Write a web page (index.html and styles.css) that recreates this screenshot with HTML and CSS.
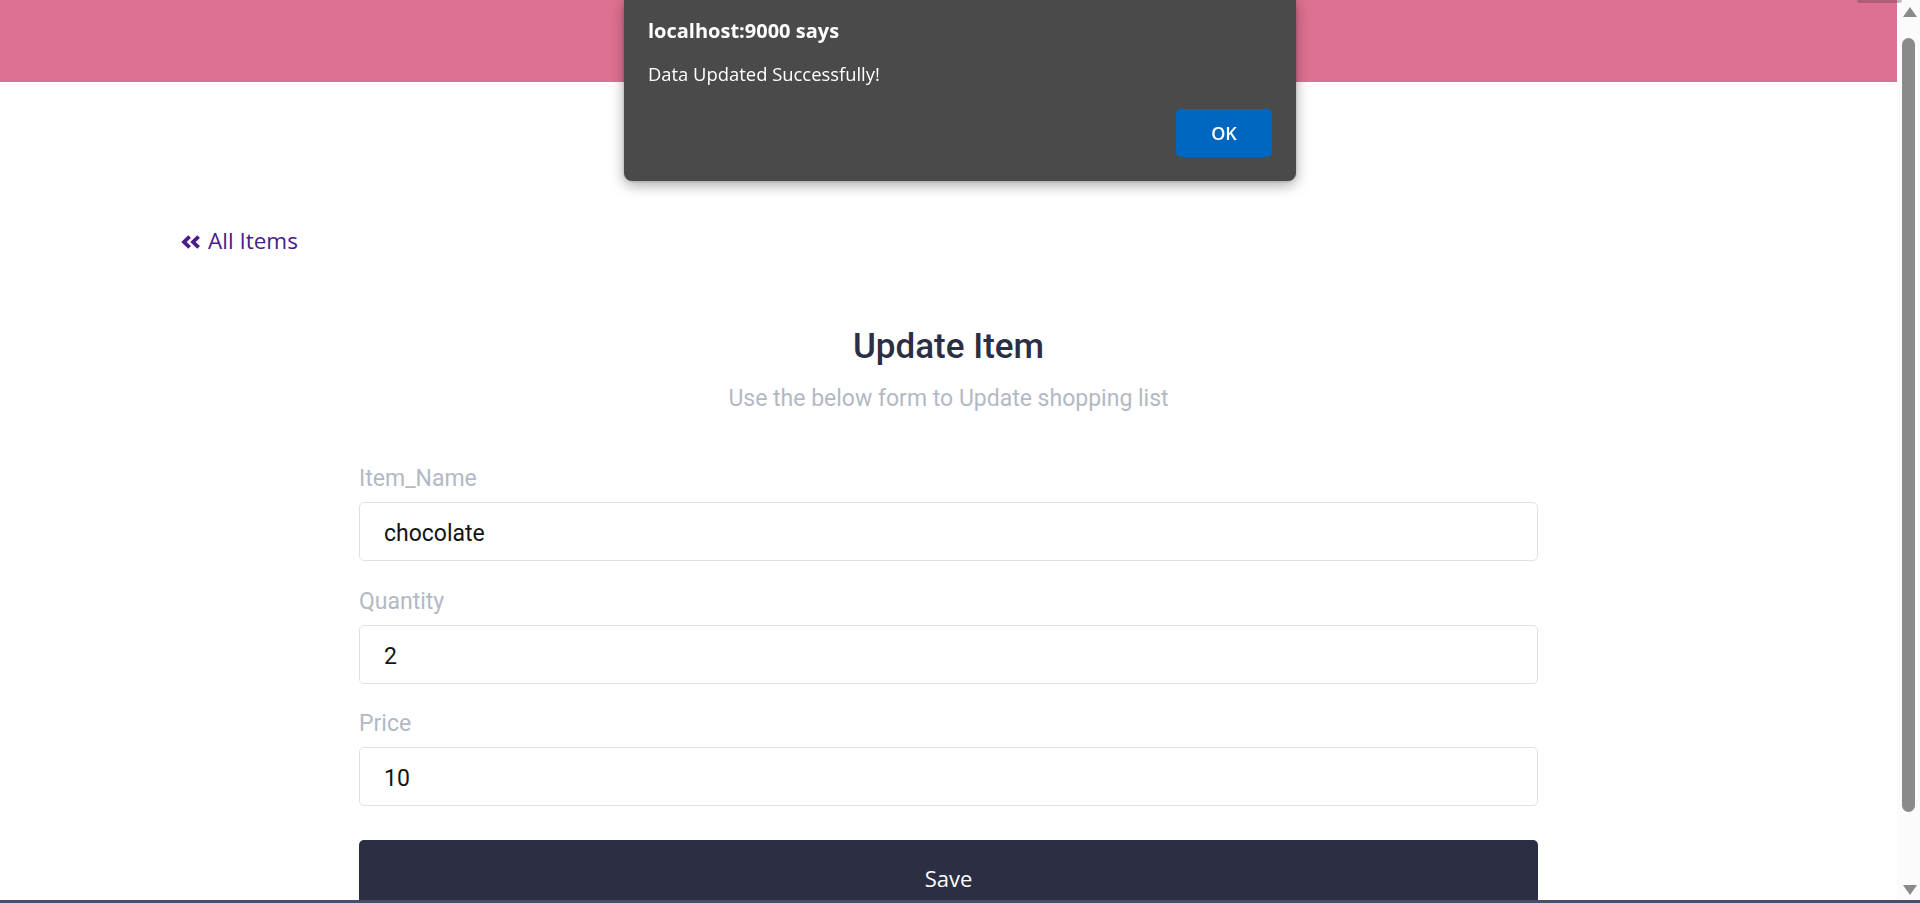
FILE: index.html
```html
<!DOCTYPE html>
<html lang="en">
<head>
<meta charset="utf-8">
<title>Update Item</title>
<link rel="stylesheet" href="styles.css">
</head>
<body>
<div class="window">
  <div class="page">
    <header class="topbar"></header>
    <div class="container">
      <a class="back-link" href="#">
        <svg class="back-icon" viewBox="0 0 20 14" width="20" height="14" aria-hidden="true">
          <polyline points="8.6,1.6 3,7 8.6,12.4" />
          <polyline points="17.6,1.6 12,7 17.6,12.4" />
        </svg>
        <span>All Items</span>
      </a>
      <h1 class="title">Update Item</h1>
      <p class="subtitle">Use the below form to Update shopping list</p>
      <form class="item-form">
        <div class="field">
          <label class="field-label" for="name">Item_Name</label>
          <input class="field-input" id="name" type="text" value="chocolate">
        </div>
        <div class="field">
          <label class="field-label" for="qty">Quantity</label>
          <input class="field-input" id="qty" type="text" value="2">
        </div>
        <div class="field">
          <label class="field-label" for="price">Price</label>
          <input class="field-input" id="price" type="text" value="10">
        </div>
        <button class="save-btn" type="button">Save</button>
      </form>
    </div>
  </div>
  <div class="scrollbar">
    <div class="scroll-arrow up"></div>
    <div class="scroll-track">
      <div class="scroll-thumb"></div>
    </div>
    <div class="scroll-arrow down"></div>
  </div>
</div>

<div class="corner-tab"></div>

<div class="alert-dialog" role="alertdialog">
  <div class="alert-title">localhost:9000 says</div>
  <div class="alert-message">Data Updated Successfully!</div>
  <div class="alert-actions">
    <button class="alert-ok" type="button">OK</button>
  </div>
</div>

<div class="bottom-edge"></div>
</body>
</html>
```

FILE: styles.css
```css
* {
  box-sizing: border-box;
}

html, body {
  margin: 0;
  padding: 0;
  height: 100%;
  overflow: hidden;
  background: #ffffff;
}

body {
  font-family: Roboto, "Noto Sans", sans-serif;
}

.window {
  display: flex;
  height: 903px;
  width: 1920px;
}

.page {
  flex: 1;
  min-width: 0;
  background: #ffffff;
}

.topbar {
  height: 82px;
  background: #dd7191;
}

.container {
  padding-left: 181px;
}

.back-link {
  display: inline-flex;
  align-items: center;
  gap: 7px;
  margin-top: 144px;
  height: 30px;
  font-family: "Open Sans", "Noto Sans", sans-serif;
  font-size: 22.5px;
  line-height: 30px;
  color: #4a1c8a;
  text-decoration: none;
}

.back-icon {
  display: block;
  margin-top: 1px;
}

.back-icon polyline {
  fill: none;
  stroke: #4a1c8a;
  stroke-width: 3.8;
  stroke-linecap: butt;
  stroke-linejoin: miter;
}

.title {
  margin: 70px 0 0 -181px;
  text-align: center;
  font-family: Roboto, sans-serif;
  font-weight: 500;
  font-size: 35px;
  line-height: 42px;
  color: #2c2e43;
}

.subtitle {
  margin: 17px 0 0 -181px;
  text-align: center;
  font-size: 23px;
  line-height: 28px;
  color: #b3b9c4;
}

.item-form {
  width: 1179px;
  margin: 52px 0 0 178px;
  display: flex;
  flex-direction: column;
}

.field {
  display: flex;
  flex-direction: column;
  margin-bottom: 26.5px;
}

.field-label {
  font-size: 23px;
  line-height: 28px;
  color: #b3b9c4;
  margin-bottom: 9px;
}

.field-input {
  height: 59px;
  width: 100%;
  border: 1px solid #dfe1e6;
  border-radius: 5px;
  padding: 4px 24px 0 24px;
  font-family: Roboto, sans-serif;
  font-size: 23px;
  color: #141414;
  background: #ffffff;
  outline: none;
}

.save-btn {
  margin-top: 7px;
  height: 76px;
  width: 100%;
  border: none;
  border-radius: 5px;
  background: #2c2e43;
  color: #ffffff;
  font-family: "Open Sans", "Noto Sans", sans-serif;
  font-size: 22px;
  line-height: 76px;
  padding: 0;
}

/* fake scrollbar */
.scrollbar {
  width: 23px;
  flex: none;
  background: #fbfbfb;
  display: flex;
  flex-direction: column;
  align-items: center;
}

.scroll-arrow {
  width: 0;
  height: 0;
  border-left: 7px solid transparent;
  border-right: 7px solid transparent;
  margin-left: 2px;
}

.scroll-arrow.up {
  margin-top: 7px;
  border-bottom: 10px solid #8a8a8a;
}

.scroll-arrow.down {
  margin-bottom: 8px;
  border-top: 10px solid #8a8a8a;
}

.scroll-track {
  flex: 1;
  width: 100%;
  padding-top: 21px;
  padding-left: 5px;
}

.scroll-thumb {
  width: 13px;
  height: 774px;
  border-radius: 7px;
  background: #8a8a8a;
}

.corner-tab {
  position: fixed;
  top: 0;
  left: 1857px;
  width: 45px;
  height: 3px;
  border-radius: 0 0 4px 4px;
  background: rgba(90, 60, 70, 0.35);
}

/* alert dialog overlay */
.alert-dialog {
  position: fixed;
  top: 0;
  left: 50%;
  transform: translateX(-50%);
  width: 672px;
  height: 181px;
  background: #4a4a4a;
  border-radius: 0 0 8px 8px;
  box-shadow: 0 4px 14px rgba(0, 0, 0, 0.35), 0 0 3px rgba(0, 0, 0, 0.2);
  padding: 19px 24px 24px 24px;
  font-family: "Open Sans", "Noto Sans", sans-serif;
  color: #ffffff;
  display: flex;
  flex-direction: column;
}

.alert-title {
  font-weight: 700;
  font-size: 20px;
  line-height: 24px;
}

.alert-message {
  margin-top: 19px;
  font-size: 18.4px;
  line-height: 24px;
}

.alert-actions {
  margin-top: auto;
  display: flex;
  justify-content: flex-end;
}

.alert-ok {
  width: 96px;
  height: 48px;
  border: none;
  border-radius: 5px;
  background: #0067c0;
  color: #ffffff;
  font-family: "Open Sans", "Noto Sans", sans-serif;
  font-weight: 600;
  font-size: 18px;
  padding: 0;
}

.bottom-edge {
  position: fixed;
  left: 0;
  bottom: 0;
  width: 100%;
  height: 3px;
  background: #4a4d6a;
}
```
